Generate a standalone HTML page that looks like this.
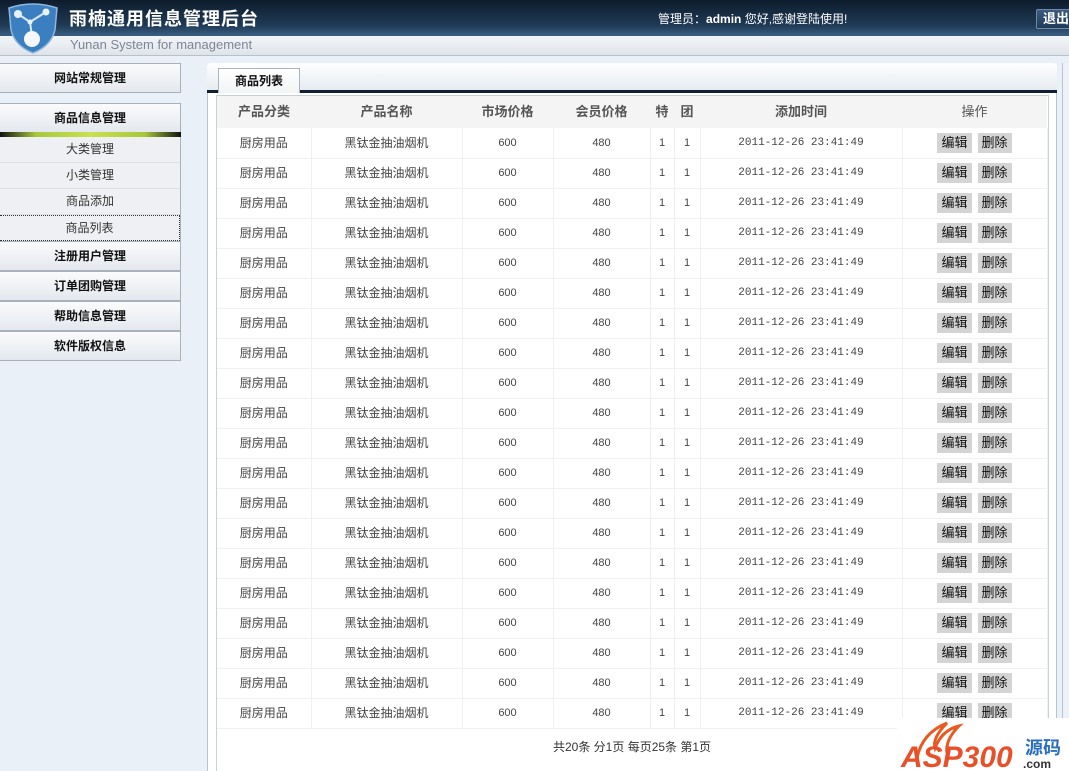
<!DOCTYPE html>
<html><head><meta charset="utf-8"><style>
*{margin:0;padding:0;box-sizing:border-box}
html,body{width:1069px;height:771px;overflow:hidden}
body{background:#eaf0f8;font-family:"Liberation Sans","Noto Sans CJK SC",sans-serif;font-size:12px;color:#333;position:relative}
.top{position:absolute;left:0;top:0;width:1069px;height:36px;background:linear-gradient(#0e1c2c,#1f3a55 70%,#3a5f82)}
.band{position:absolute;left:0;top:36px;width:1069px;height:20px;background:linear-gradient(#f3f5f8,#dfe4ea);border-bottom:1px solid #b8c0c8}
.title{position:absolute;left:69px;top:5px;color:#fff;font-size:18px;font-weight:bold;letter-spacing:1px}
.sub{position:absolute;left:70px;top:37px;color:#7a8794;font-size:13px}
.user{position:absolute;left:658px;top:10px;color:#fff;font-size:12px}
.exit{position:absolute;left:1036px;top:9px;width:40px;height:20px;border:1px solid #6f8aa8;background:linear-gradient(#3c5b7c,#1f3b58);color:#fff;font-weight:bold;font-size:13px;padding-left:6px;line-height:18px;border-radius:2px}
.btn{position:absolute;left:0;width:181px;height:30px;background:linear-gradient(#fafbfc,#e4e8ee);border:1px solid #a9b1ba;border-left:none;text-align:center;line-height:28px;font-weight:bold;color:#111;font-size:12px}
.subm{position:absolute;left:0;top:137px;width:181px;height:104px;background:#eef0f3;border-right:1px solid #a9b1ba}
.subm div{height:26px;line-height:25px;text-align:center;border-bottom:1px solid #dcdfe3;color:#333}
.bar{position:absolute;left:0;top:132px;width:181px;height:5px;background:linear-gradient(90deg,#111,#a8c83a 20%,#c9e050 50%,#a8c83a 80%,#111)}
.main{position:absolute;left:207px;top:63px;width:850px;height:712px;background:#fff;border:1px solid #b6c3d2;border-radius:3px}
.tabbar{position:absolute;left:207px;top:63px;width:850px;height:30px;background:linear-gradient(#fff,#e6ebf1);border-radius:3px 3px 0 0;border-bottom:3px solid #102030}
.tab{position:absolute;left:218px;top:68px;width:82px;height:25px;background:linear-gradient(#fff,#f2f4f6);border:1px solid #aab4c0;border-bottom:none;text-align:center;line-height:24px;font-weight:bold;color:#111}
.box{position:absolute;left:216px;top:95px;width:833px;height:678px;border:1px solid #c6d0d8}
table{position:absolute;left:217px;top:96px;border-collapse:collapse;table-layout:fixed;width:830px}
td,th{height:30px;text-align:center;font-size:12px;color:#444;border-right:1px solid #f0f0f0;border-bottom:1px solid #f0f0f0;font-weight:normal;white-space:nowrap;line-height:26px}
th{height:32px;background:#f4f4f4;font-weight:bold;color:#555;font-size:13px;border:none}
th.op{font-weight:normal}
td.m{font-family:"Liberation Mono",monospace;font-size:11px}
td.n{font-size:11px}
.b{display:inline-block;background:#d4d4d4;color:#111;font-size:13px;padding:0 4px;height:20px;line-height:20px;margin:0 3px}
.foot{position:absolute;left:553px;top:738px;color:#333}
.scroll{position:absolute;left:1062px;top:63px;width:7px;height:708px;background:#eef1f5;border-left:1px solid #b6c3d2}
.logo{position:absolute;left:897px;top:718px;width:172px;height:53px;background:#fff}
</style></head><body>
<div class="top"></div><div class="band"></div>
<svg style="position:absolute;left:6px;top:2px" width="54" height="52" viewBox="0 0 54 52"><path d="M3 6 Q27 -2 51 6 L49 28 Q45 44 27 51 Q9 44 5 28Z" fill="#3b7fc0" stroke="#8fb6dc" stroke-width="1.5"/><path d="M12 12 L24 20 L40 10 M24 20 L26 34" stroke="#d8e8f6" stroke-width="2" fill="none"/><circle cx="12" cy="12" r="4" fill="#e8f2fc"/><circle cx="40" cy="10" r="3.5" fill="#e8f2fc"/><circle cx="24" cy="20" r="2.5" fill="#e8f2fc"/><circle cx="26" cy="37" r="8" fill="#f4f8fc"/></svg>
<div class="title">雨楠通用信息管理后台</div>
<div class="sub">Yunan System for management</div>
<div class="user">管理员：<b>admin</b> 您好,感谢登陆使用!</div>
<div class="exit">退出</div>

<div class="btn" style="top:63px">网站常规管理</div>
<div class="btn" style="top:103px">商品信息管理</div>
<div class="bar"></div>
<div class="subm"><div>大类管理</div><div>小类管理</div><div>商品添加</div><div style="border:1px dotted #333;border-left:none">商品列表</div></div>
<div class="btn" style="top:241px">注册用户管理</div>
<div class="btn" style="top:271px">订单团购管理</div>
<div class="btn" style="top:301px">帮助信息管理</div>
<div class="btn" style="top:331px">软件版权信息</div>

<div class="main"></div>
<div class="tabbar"></div>
<div class="tab">商品列表</div>
<div class="box"></div>
<table>
<colgroup><col style="width:94px"><col style="width:151px"><col style="width:91px"><col style="width:97px"><col style="width:24px"><col style="width:26px"><col style="width:202px"><col style="width:145px"></colgroup>
<tr><th>产品分类</th><th>产品名称</th><th>市场价格</th><th>会员价格</th><th>特</th><th>团</th><th>添加时间</th><th class="op">操作</th></tr>
<tr><td>厨房用品</td><td>黑钛金抽油烟机</td><td class="n">600</td><td class="n">480</td><td class="n">1</td><td class="n">1</td><td class="m">2011-12-26 23:41:49</td><td><span class="b">编辑</span><span class="b">删除</span></td></tr>
<tr><td>厨房用品</td><td>黑钛金抽油烟机</td><td class="n">600</td><td class="n">480</td><td class="n">1</td><td class="n">1</td><td class="m">2011-12-26 23:41:49</td><td><span class="b">编辑</span><span class="b">删除</span></td></tr>
<tr><td>厨房用品</td><td>黑钛金抽油烟机</td><td class="n">600</td><td class="n">480</td><td class="n">1</td><td class="n">1</td><td class="m">2011-12-26 23:41:49</td><td><span class="b">编辑</span><span class="b">删除</span></td></tr>
<tr><td>厨房用品</td><td>黑钛金抽油烟机</td><td class="n">600</td><td class="n">480</td><td class="n">1</td><td class="n">1</td><td class="m">2011-12-26 23:41:49</td><td><span class="b">编辑</span><span class="b">删除</span></td></tr>
<tr><td>厨房用品</td><td>黑钛金抽油烟机</td><td class="n">600</td><td class="n">480</td><td class="n">1</td><td class="n">1</td><td class="m">2011-12-26 23:41:49</td><td><span class="b">编辑</span><span class="b">删除</span></td></tr>
<tr><td>厨房用品</td><td>黑钛金抽油烟机</td><td class="n">600</td><td class="n">480</td><td class="n">1</td><td class="n">1</td><td class="m">2011-12-26 23:41:49</td><td><span class="b">编辑</span><span class="b">删除</span></td></tr>
<tr><td>厨房用品</td><td>黑钛金抽油烟机</td><td class="n">600</td><td class="n">480</td><td class="n">1</td><td class="n">1</td><td class="m">2011-12-26 23:41:49</td><td><span class="b">编辑</span><span class="b">删除</span></td></tr>
<tr><td>厨房用品</td><td>黑钛金抽油烟机</td><td class="n">600</td><td class="n">480</td><td class="n">1</td><td class="n">1</td><td class="m">2011-12-26 23:41:49</td><td><span class="b">编辑</span><span class="b">删除</span></td></tr>
<tr><td>厨房用品</td><td>黑钛金抽油烟机</td><td class="n">600</td><td class="n">480</td><td class="n">1</td><td class="n">1</td><td class="m">2011-12-26 23:41:49</td><td><span class="b">编辑</span><span class="b">删除</span></td></tr>
<tr><td>厨房用品</td><td>黑钛金抽油烟机</td><td class="n">600</td><td class="n">480</td><td class="n">1</td><td class="n">1</td><td class="m">2011-12-26 23:41:49</td><td><span class="b">编辑</span><span class="b">删除</span></td></tr>
<tr><td>厨房用品</td><td>黑钛金抽油烟机</td><td class="n">600</td><td class="n">480</td><td class="n">1</td><td class="n">1</td><td class="m">2011-12-26 23:41:49</td><td><span class="b">编辑</span><span class="b">删除</span></td></tr>
<tr><td>厨房用品</td><td>黑钛金抽油烟机</td><td class="n">600</td><td class="n">480</td><td class="n">1</td><td class="n">1</td><td class="m">2011-12-26 23:41:49</td><td><span class="b">编辑</span><span class="b">删除</span></td></tr>
<tr><td>厨房用品</td><td>黑钛金抽油烟机</td><td class="n">600</td><td class="n">480</td><td class="n">1</td><td class="n">1</td><td class="m">2011-12-26 23:41:49</td><td><span class="b">编辑</span><span class="b">删除</span></td></tr>
<tr><td>厨房用品</td><td>黑钛金抽油烟机</td><td class="n">600</td><td class="n">480</td><td class="n">1</td><td class="n">1</td><td class="m">2011-12-26 23:41:49</td><td><span class="b">编辑</span><span class="b">删除</span></td></tr>
<tr><td>厨房用品</td><td>黑钛金抽油烟机</td><td class="n">600</td><td class="n">480</td><td class="n">1</td><td class="n">1</td><td class="m">2011-12-26 23:41:49</td><td><span class="b">编辑</span><span class="b">删除</span></td></tr>
<tr><td>厨房用品</td><td>黑钛金抽油烟机</td><td class="n">600</td><td class="n">480</td><td class="n">1</td><td class="n">1</td><td class="m">2011-12-26 23:41:49</td><td><span class="b">编辑</span><span class="b">删除</span></td></tr>
<tr><td>厨房用品</td><td>黑钛金抽油烟机</td><td class="n">600</td><td class="n">480</td><td class="n">1</td><td class="n">1</td><td class="m">2011-12-26 23:41:49</td><td><span class="b">编辑</span><span class="b">删除</span></td></tr>
<tr><td>厨房用品</td><td>黑钛金抽油烟机</td><td class="n">600</td><td class="n">480</td><td class="n">1</td><td class="n">1</td><td class="m">2011-12-26 23:41:49</td><td><span class="b">编辑</span><span class="b">删除</span></td></tr>
<tr><td>厨房用品</td><td>黑钛金抽油烟机</td><td class="n">600</td><td class="n">480</td><td class="n">1</td><td class="n">1</td><td class="m">2011-12-26 23:41:49</td><td><span class="b">编辑</span><span class="b">删除</span></td></tr>
<tr><td>厨房用品</td><td>黑钛金抽油烟机</td><td class="n">600</td><td class="n">480</td><td class="n">1</td><td class="n">1</td><td class="m">2011-12-26 23:41:49</td><td><span class="b">编辑</span><span class="b">删除</span></td></tr>
</table>
<div class="foot">共20条 分1页 每页25条 第1页</div>
<div class="scroll"></div>
<div class="logo">
<svg width="172" height="53" viewBox="0 0 172 53" style="position:absolute;left:0;top:0"><path d="M20 40 Q25 15 50 5 Q35 20 38 30 Q45 12 62 8 Q48 22 50 35" fill="none" stroke="#e85a20" stroke-width="3"/>
<text x="4" y="49" font-family="Liberation Sans" font-weight="bold" font-style="italic" font-size="30" fill="#e8502a">ASP300</text>
<text x="128" y="36" font-family="Noto Sans CJK SC" font-weight="bold" font-size="18" fill="#2a6fc0">源码</text>
<text x="126" y="50" font-family="Liberation Sans" font-weight="bold" font-size="12" fill="#333">.com</text></svg>
</div>
</body></html>
